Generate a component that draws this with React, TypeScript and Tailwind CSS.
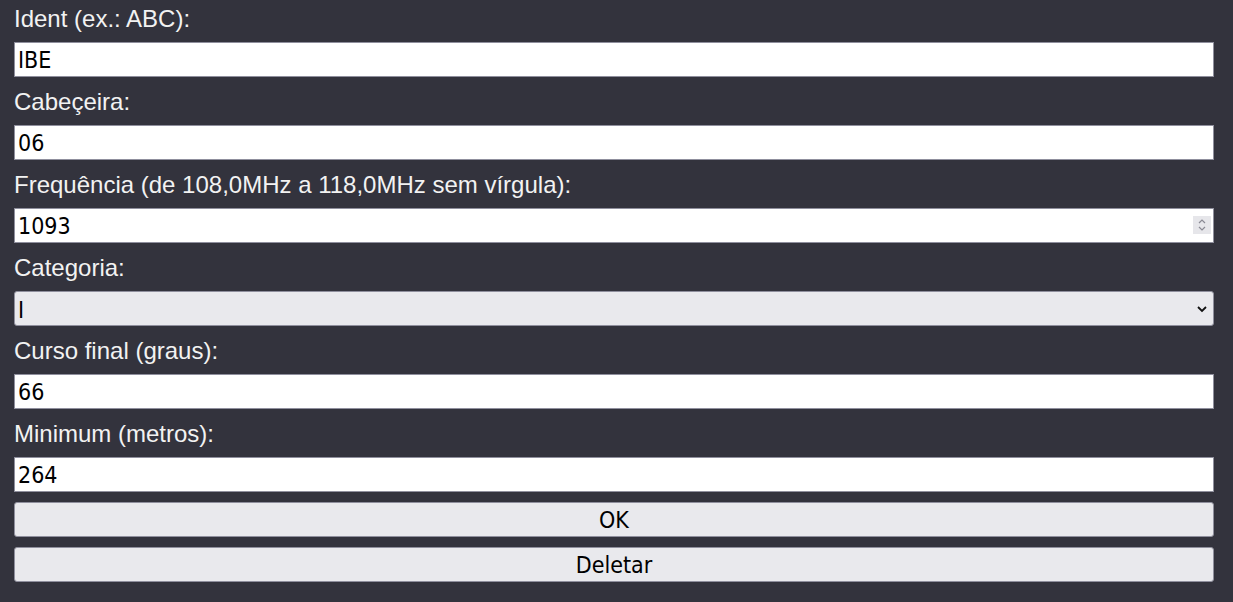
import React from 'react';

const labelCls =
  "block pt-[5px] pb-[10px] leading-[27px] text-[24px] text-[#f2f2f2] font-['Liberation_Sans',Arial,sans-serif]";
const fieldCls =
  "block w-full h-[35px] px-[3px] pt-[1px] text-[23px] text-black font-['DejaVu_Sans',Tahoma,sans-serif] font-stretch-condensed outline-none";
const buttonCls =
  "h-[35px] w-full bg-[#e9e9ed] border border-[#8f8f9d] rounded-[3px] text-[23px] text-black font-['DejaVu_Sans',Tahoma,sans-serif] font-stretch-condensed";

const Field = ({ label, value, first }: { label: string; value: string; first?: boolean }) => (
  <div className={first ? '' : 'mt-[6px]'}>
    <label className={labelCls}>{label}</label>
    <input
      type="text"
      defaultValue={value}
      className={`${fieldCls} bg-white border border-[#8f8f9d]`}
    />
  </div>
);

const App = () => {
  return (
    <div className="min-h-[602px] bg-[#33333d] pl-[14px] pr-[19px]">
      <Field first label="Ident (ex.: ABC):" value="IBE" />
      <Field label="Cabeçeira:" value="06" />

      <div className="mt-[6px]">
        <label className={labelCls}>Frequência (de 108,0MHz a 118,0MHz sem vírgula):</label>
        <div className="relative">
          <input
            type="text"
            defaultValue="1093"
            className={`${fieldCls} bg-white border border-[#8f8f9d]`}
          />
          {/* spin buttons */}
          <div className="absolute right-[3px] top-[8px] w-[18px] h-[18px] bg-[#e6e6ea] flex flex-col items-center justify-center">
            <svg width="10" height="14" viewBox="0 0 10 14" fill="none" stroke="#8a8a94" strokeWidth="1.2">
              <path d="M2 5 L5 2 L8 5" />
              <path d="M2 9 L5 12 L8 9" />
            </svg>
          </div>
        </div>
      </div>

      <div className="mt-[6px]">
        <label className={labelCls}>Categoria:</label>
        <div className="relative">
          <select
            defaultValue="I"
            className={`${fieldCls} appearance-none bg-[#e9e9ed] border border-[#8f8f9d] rounded-[3px]`}
          >
            <option value="I">I</option>
            <option value="II">II</option>
            <option value="III">III</option>
          </select>
          <svg
            className="absolute right-[7px] top-[14px] pointer-events-none"
            width="10"
            height="8"
            viewBox="0 0 10 8"
            fill="none"
            stroke="#111"
            strokeWidth="1.8"
          >
            <path d="M1 2 L5 6 L9 2" />
          </svg>
        </div>
      </div>

      <Field label="Curso final (graus):" value="66" />
      <Field label="Minimum (metros):" value="264" />

      <div className="flex flex-col gap-[10px] pt-[10px] pb-[20px]">
        <button className={buttonCls}>OK</button>
        <button className={buttonCls}>Deletar</button>
      </div>
    </div>
  );
};

export default App;
